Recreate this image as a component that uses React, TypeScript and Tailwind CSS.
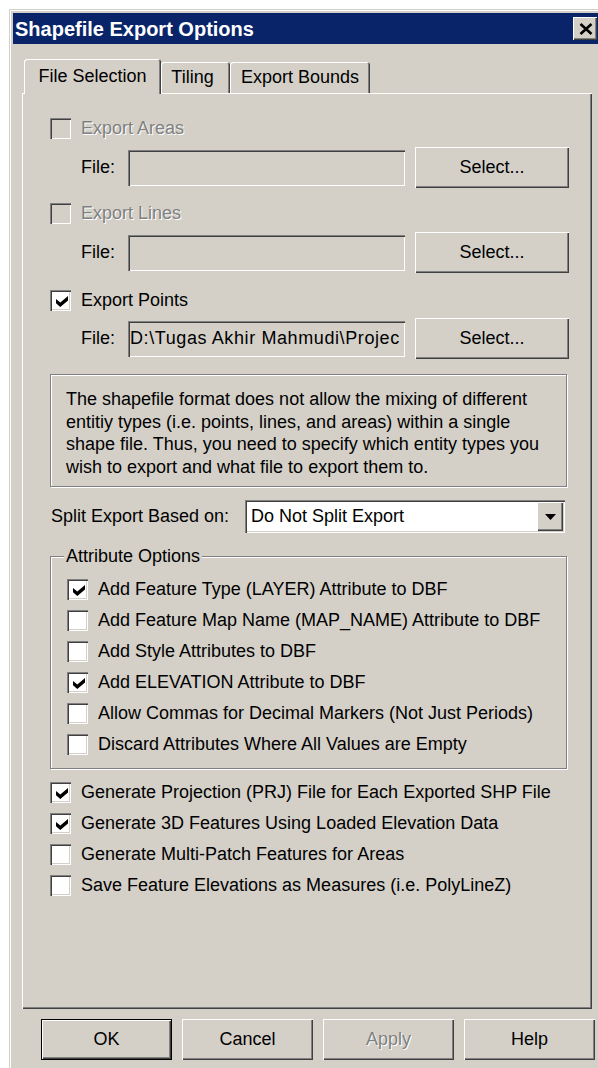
import React from "react";

// classic 3D bevels
const raised =
  "shadow-[inset_1px_1px_0_#ffffff,inset_-1px_-1px_0_#404040,inset_-2px_-2px_0_#808080]";
const sunken =
  "shadow-[inset_1px_1px_0_#808080,inset_2px_2px_0_#404040,inset_-1px_-1px_0_#ffffff,inset_-2px_-2px_0_#d4d0c8]";
const etched = "border border-[#808080] shadow-[inset_1px_1px_0_#ffffff,1px_1px_0_#ffffff]";
const grayed = "text-[#808080] [text-shadow:1px_1px_0_#ffffff]";
const tabEdge = "shadow-[inset_1px_1px_0_#ffffff,inset_-1px_0_0_#404040,inset_-2px_0_0_#808080]";

function Checkbox({ checked = false, disabled = false }: { checked?: boolean; disabled?: boolean }) {
  return (
    <span
      className={`flex h-[21px] w-[21px] shrink-0 items-center justify-center pl-[2px] pt-[2px] ${
        disabled ? "bg-[#d4d0c8]" : "bg-white"
      } ${sunken}`}
    >
      {checked && (
        <svg width="12" height="11" viewBox="0 0 7 7.5" preserveAspectRatio="none">
          <polygon points="0,2 2.5,4.5 7,0 7,3 2.5,7.5 0,5" fill="#000" />
        </svg>
      )}
    </span>
  );
}

function Option({
  label,
  checked,
  disabled,
  className = "",
}: {
  label: string;
  checked?: boolean;
  disabled?: boolean;
  className?: string;
}) {
  return (
    <div className={`flex items-center gap-[10px] ${className}`}>
      <Checkbox checked={checked} disabled={disabled} />
      <span className={`whitespace-nowrap ${disabled ? grayed : ""}`}>{label}</span>
    </div>
  );
}

function FileRow({ value, className = "" }: { value?: string; className?: string }) {
  return (
    <div className={`ml-[59px] flex h-[41px] items-center ${className}`}>
      <span className="w-[47px]">File:</span>
      <div
        className={`flex h-[36px] w-[277px] items-center overflow-hidden whitespace-nowrap bg-[#d4d0c8] pl-[2px] tracking-[0.6px] ${sunken}`}
      >
        {value}
      </div>
      <button className={`ml-[10px] h-[41px] w-[154px] bg-[#d4d0c8] ${raised}`}>Select...</button>
    </div>
  );
}

const attributes = [
  { label: "Add Feature Type (LAYER) Attribute to DBF", checked: true },
  { label: "Add Feature Map Name (MAP_NAME) Attribute to DBF" },
  { label: "Add Style Attributes to DBF" },
  { label: "Add ELEVATION Attribute to DBF", checked: true },
  { label: "Allow Commas for Decimal Markers (Not Just Periods)" },
  { label: "Discard Attributes Where All Values are Empty" },
];

const general = [
  { label: "Generate Projection (PRJ) File for Each Exported SHP File", checked: true },
  { label: "Generate 3D Features Using Loaded Elevation Data", checked: true },
  { label: "Generate Multi-Patch Features for Areas" },
  { label: "Save Feature Elevations as Measures (i.e. PolyLineZ)" },
];

export default function App() {
  return (
    <div className="h-[1068px] w-[598px] overflow-hidden bg-white font-['Liberation_Sans',Arial,sans-serif] text-[18px] text-black">
      <div className="ml-[9px] mt-[9px] h-[1070px] w-[594px] border-l border-t border-[#d4d0c8] bg-[#d4d0c8]">
        <div className="h-full border-l border-t border-white p-[2px]">
          {/* title bar */}
          <div className="flex h-[31px] w-[585px] items-center bg-[#0a246a] pl-[2px]">
            <span className="flex-1 text-[20px] font-bold text-white">Shapefile Export Options</span>
            <button
              className={`mr-[1px] flex h-[23px] w-[24px] items-center justify-center bg-[#d4d0c8] pl-[2px] ${raised}`}
            >
              <svg width="14" height="12" viewBox="0 0 14 12">
                <path d="M1.5 1 L12.5 11 M12.5 1 L1.5 11" stroke="#000" strokeWidth="2.6" />
              </svg>
            </button>
          </div>

          {/* tabs */}
          <div className="relative z-10 ml-[11px] mt-[15px] flex h-[34px] items-end">
            <div
              className={`mb-[-1px] flex h-[35px] w-[137px] items-center justify-center rounded-t-[3px] bg-[#d4d0c8] ${tabEdge}`}
            >
              File Selection
            </div>
            <div
              className={`flex h-[31px] w-[69px] items-center justify-center rounded-t-[3px] bg-[#d4d0c8] pr-[6px] ${tabEdge}`}
            >
              Tiling
            </div>
            <div
              className={`flex h-[31px] w-[140px] items-center justify-center rounded-t-[3px] bg-[#d4d0c8] ${tabEdge}`}
            >
              Export Bounds
            </div>
          </div>

          {/* tab page */}
          <div className={`ml-[9px] flex h-[916px] w-[570px] flex-col ${raised}`}>
            <Option label="Export Areas" disabled className="ml-[28px] mt-[25px] h-[21px]" />
            <FileRow className="mt-[8px]" />
            <Option label="Export Lines" disabled className="ml-[28px] mt-[15px] h-[21px]" />
            <FileRow className="mt-[8px]" />
            <Option label="Export Points" checked className="ml-[28px] mt-[17px] h-[21px]" />
            <FileRow className="mt-[7px]" value="D:\Tugas Akhir Mahmudi\Projec" />

            <div className={`ml-[28px] mt-[15px] h-[113px] w-[517px] pl-[15px] pt-[13px] leading-[22.5px] ${etched}`}>
              <div className="whitespace-nowrap">The shapefile format does not allow the mixing of different</div>
              <div className="whitespace-nowrap">entitiy types (i.e. points, lines, and areas) within a single</div>
              <div className="whitespace-nowrap">shape file. Thus, you need to specify which entity types you</div>
              <div className="whitespace-nowrap">wish to export and what file to export them to.</div>
            </div>

            <div className="ml-[28px] mt-[13px] flex h-[33px] items-center">
              <span className="w-[195px] pl-[1px]">Split Export Based on:</span>
              <div className={`flex h-[33px] w-[320px] items-center bg-white ${sunken}`}>
                <span className="flex-1 pl-[6px]">Do Not Split Export</span>
                <span
                  className={`mr-[2px] flex h-[29px] w-[26px] items-center justify-center bg-[#d4d0c8] pl-[1px] ${raised}`}
                >
                  <svg width="11" height="6" viewBox="0 0 11 6">
                    <polygon points="0,0 11,0 5.5,6" fill="#000" />
                  </svg>
                </span>
              </div>
            </div>

            {/* attribute group */}
            <div className={`relative ml-[28px] mt-[23px] h-[213px] w-[517px] pl-[16px] pt-[17px] ${etched}`}>
              <span className="absolute left-[13px] top-[-11px] bg-[#d4d0c8] px-[2px] leading-[20px]">
                Attribute Options
              </span>
              {attributes.map((a) => (
                <Option key={a.label} label={a.label} checked={a.checked} className="h-[31px]" />
              ))}
            </div>

            <div className="ml-[28px] mt-[8px]">
              {general.map((g) => (
                <Option key={g.label} label={g.label} checked={g.checked} className="h-[31px]" />
              ))}
            </div>
          </div>

          {/* dialog buttons */}
          <div className="ml-[28px] mt-[10px] flex gap-[10px]">
            <button className="h-[41px] w-[131px] border border-black bg-[#d4d0c8]">
              <span className={`flex h-full w-full items-center justify-center ${raised}`}>OK</span>
            </button>
            <button className={`h-[41px] w-[131px] bg-[#d4d0c8] ${raised}`}>Cancel</button>
            <button className={`h-[41px] w-[131px] bg-[#d4d0c8] ${raised} ${grayed}`}>Apply</button>
            <button className={`h-[41px] w-[131px] bg-[#d4d0c8] ${raised}`}>Help</button>
          </div>
        </div>
      </div>
    </div>
  );
}
